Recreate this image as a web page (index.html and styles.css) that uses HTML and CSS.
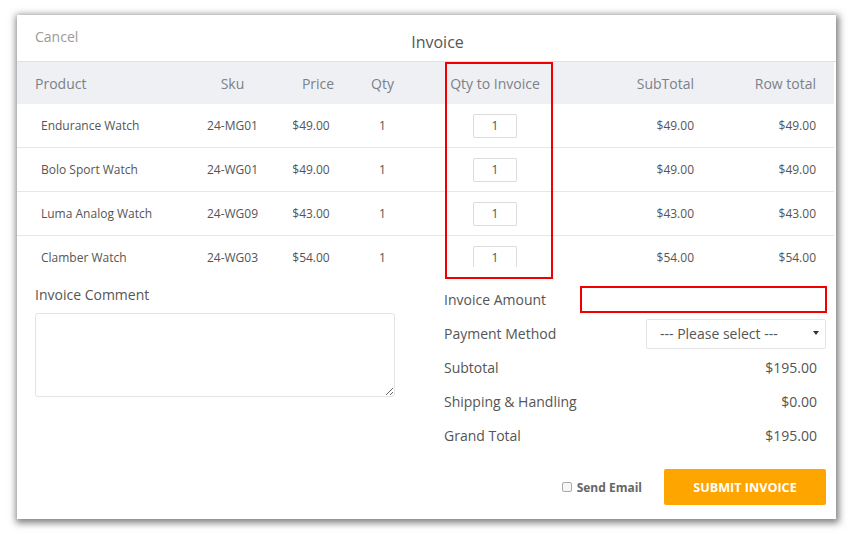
FILE: index.html
```html
<!DOCTYPE html>
<html>
<head>
<meta charset="utf-8">
<link rel="stylesheet" href="styles.css">
</head>
<body>
<div class="stage">
  <div class="panel">
    <div class="topbar">
      <a class="cancel">Cancel</a>
      <h1 class="title">Invoice</h1>
      <span></span>
    </div>
    <div class="table-wrap">
      <div class="row head">
        <div class="c-prod">Product</div>
        <div class="c-center">Sku</div>
        <div class="c-center">Price</div>
        <div class="c-center">Qty</div>
        <div class="c-center">Qty to Invoice</div>
        <div class="c-sub">SubTotal</div>
        <div class="c-total">Row total</div>
      </div>
      <div class="row">
        <div class="c-prod">Endurance Watch</div>
        <div class="c-center">24-MG01</div>
        <div class="c-center c-price">$49.00</div>
        <div class="c-center">1</div>
        <div class="c-center"><span class="qty">1</span></div>
        <div class="c-sub">$49.00</div>
        <div class="c-total">$49.00</div>
      </div>
      <div class="row">
        <div class="c-prod">Bolo Sport Watch</div>
        <div class="c-center">24-WG01</div>
        <div class="c-center c-price">$49.00</div>
        <div class="c-center">1</div>
        <div class="c-center"><span class="qty">1</span></div>
        <div class="c-sub">$49.00</div>
        <div class="c-total">$49.00</div>
      </div>
      <div class="row">
        <div class="c-prod">Luma Analog Watch</div>
        <div class="c-center">24-WG09</div>
        <div class="c-center c-price">$43.00</div>
        <div class="c-center">1</div>
        <div class="c-center"><span class="qty">1</span></div>
        <div class="c-sub">$43.00</div>
        <div class="c-total">$43.00</div>
      </div>
      <div class="row">
        <div class="c-prod">Clamber Watch</div>
        <div class="c-center">24-WG03</div>
        <div class="c-center c-price">$54.00</div>
        <div class="c-center">1</div>
        <div class="c-center"><span class="qty">1</span></div>
        <div class="c-sub">$54.00</div>
        <div class="c-total">$54.00</div>
      </div>
    </div>
    <div class="highlight-qty"></div>

    <div class="bottom">
      <div class="comment">
        <label class="comment-label">Invoice Comment</label>
        <textarea class="comment-box"></textarea>
      </div>
      <div class="summary">
        <div class="line">
          <span class="lbl">Invoice Amount</span>
          <span class="amount-input"></span>
        </div>
        <div class="line">
          <span class="lbl">Payment Method</span>
          <span class="select"><span>--- Please select ---</span>
            <svg width="6" height="4" viewBox="0 0 6 4"><path d="M0 0H6L3 4Z" fill="#333"/></svg>
          </span>
        </div>
        <div class="line">
          <span class="lbl">Subtotal</span>
          <span class="val">$195.00</span>
        </div>
        <div class="line">
          <span class="lbl">Shipping &amp; Handling</span>
          <span class="val">$0.00</span>
        </div>
        <div class="line">
          <span class="lbl">Grand Total</span>
          <span class="val">$195.00</span>
        </div>
        <div class="actions">
          <label class="send"><span class="check"></span>Send Email</label>
          <button class="submit">SUBMIT INVOICE</button>
        </div>
      </div>
    </div>
  </div>
</div>
</body>
</html>
```
FILE: styles.css
```css
* { box-sizing: border-box; }
html, body { margin: 0; padding: 0; background: #fff; }
body { font-family: "Open Sans", "Noto Sans", sans-serif; color: #555; }

.stage { padding: 15px 0 15px 17px; min-height: 534px; }

.panel {
  position: relative;
  width: 819px;
  height: 504px;
  background: #fff;
  box-shadow: 1px 2px 7px 2px rgba(0,0,0,0.5);
}

.topbar {
  display: grid;
  grid-template-columns: 1fr auto 1fr;
  height: 47px;
  border-bottom: 1px solid #dfe1e6;
  padding: 0 18px;
}
.cancel {
  font-size: 14px;
  line-height: 18px;
  color: #9a9a9a;
  padding-top: 13px;
}
.title {
  margin: 0 0 0 22px;
  font-size: 16px;
  font-weight: 400;
  line-height: 22px;
  color: #555;
  padding-top: 16px;
}

.table-wrap {
  width: 817px;
  height: 205px;
  overflow: hidden;
}
.row {
  display: grid;
  grid-template-columns: 173px 85px 80px 55px 170px 120px 134px;
  align-items: center;
  height: 44px;
  border-bottom: 1px solid #e6e7ea;
  font-size: 12px;
  color: #555;
}
.row.head {
  height: 42px;
  background: #eff0f4;
  border-bottom: none;
  font-size: 14px;
  color: #7b8189;
}
.c-prod { padding-left: 24px; }
.head .c-prod { padding-left: 18px; }
.c-center { text-align: center; }
.c-price { padding-right: 8px; }
.head .c-center:nth-child(3) { padding-left: 6px; }
.c-sub { text-align: right; padding-right: 6px; }
.c-total { text-align: right; padding-right: 18px; }

.qty {
  display: inline-block;
  width: 44px;
  height: 24px;
  line-height: 22px;
  border: 1px solid #dcdcdc;
  border-radius: 2px;
  text-align: center;
  font-size: 12px;
  color: #555;
}

.highlight-qty {
  position: absolute;
  left: 428px;
  top: 47px;
  width: 108px;
  height: 217px;
  border: 2px solid #f20000;
  pointer-events: none;
}

.bottom {
  display: grid;
  grid-template-columns: 392px 1fr;
  padding: 0 10px 0 18px;
  column-gap: 17px;
}
.comment { padding-top: 18px; }
.comment-label {
  display: block;
  font-size: 14px;
  line-height: 20px;
  color: #555;
  margin-bottom: 8px;
}
.comment-box {
  display: block;
  width: 360px;
  height: 84px;
  border: 1px solid #e4e4e4;
  border-radius: 3px;
  font-family: inherit;
}

.summary { padding-top: 15px; }
.line {
  display: flex;
  justify-content: space-between;
  align-items: center;
  height: 34px;
  font-size: 14px;
  color: #555;
}
.val { padding-right: 9px; }
.amount-input {
  width: 247px;
  height: 27px;
  margin-right: -1px;
  border: 2px solid #f20000;
  background: #fff;
}
.select {
  display: flex;
  align-items: center;
  justify-content: space-between;
  width: 180px;
  height: 30px;
  margin-top: 1px;
  padding: 0 6px 0 13px;
  border: 1px solid #e4e4e4;
  border-radius: 2px;
  font-size: 14px;
  color: #555;
}
.select svg { margin-top: -2px; }

.actions {
  display: flex;
  justify-content: flex-end;
  align-items: center;
  margin-top: 17px;
  gap: 22px;
}
.send {
  display: flex;
  align-items: center;
  gap: 5px;
  font-size: 12px;
  font-weight: 700;
  color: #666;
}
.check {
  display: inline-block;
  width: 10px;
  height: 10px;
  border: 1px solid #aaa;
  border-radius: 2px;
  background: #f6f6f6;
  margin-top: -1px;
}
.submit {
  width: 162px;
  height: 36px;
  border: none;
  border-radius: 2px;
  background: #ffa500;
  color: #fff;
  font-family: inherit;
  font-size: 12.6px;
  font-weight: 700;
  padding: 0;
}
```
